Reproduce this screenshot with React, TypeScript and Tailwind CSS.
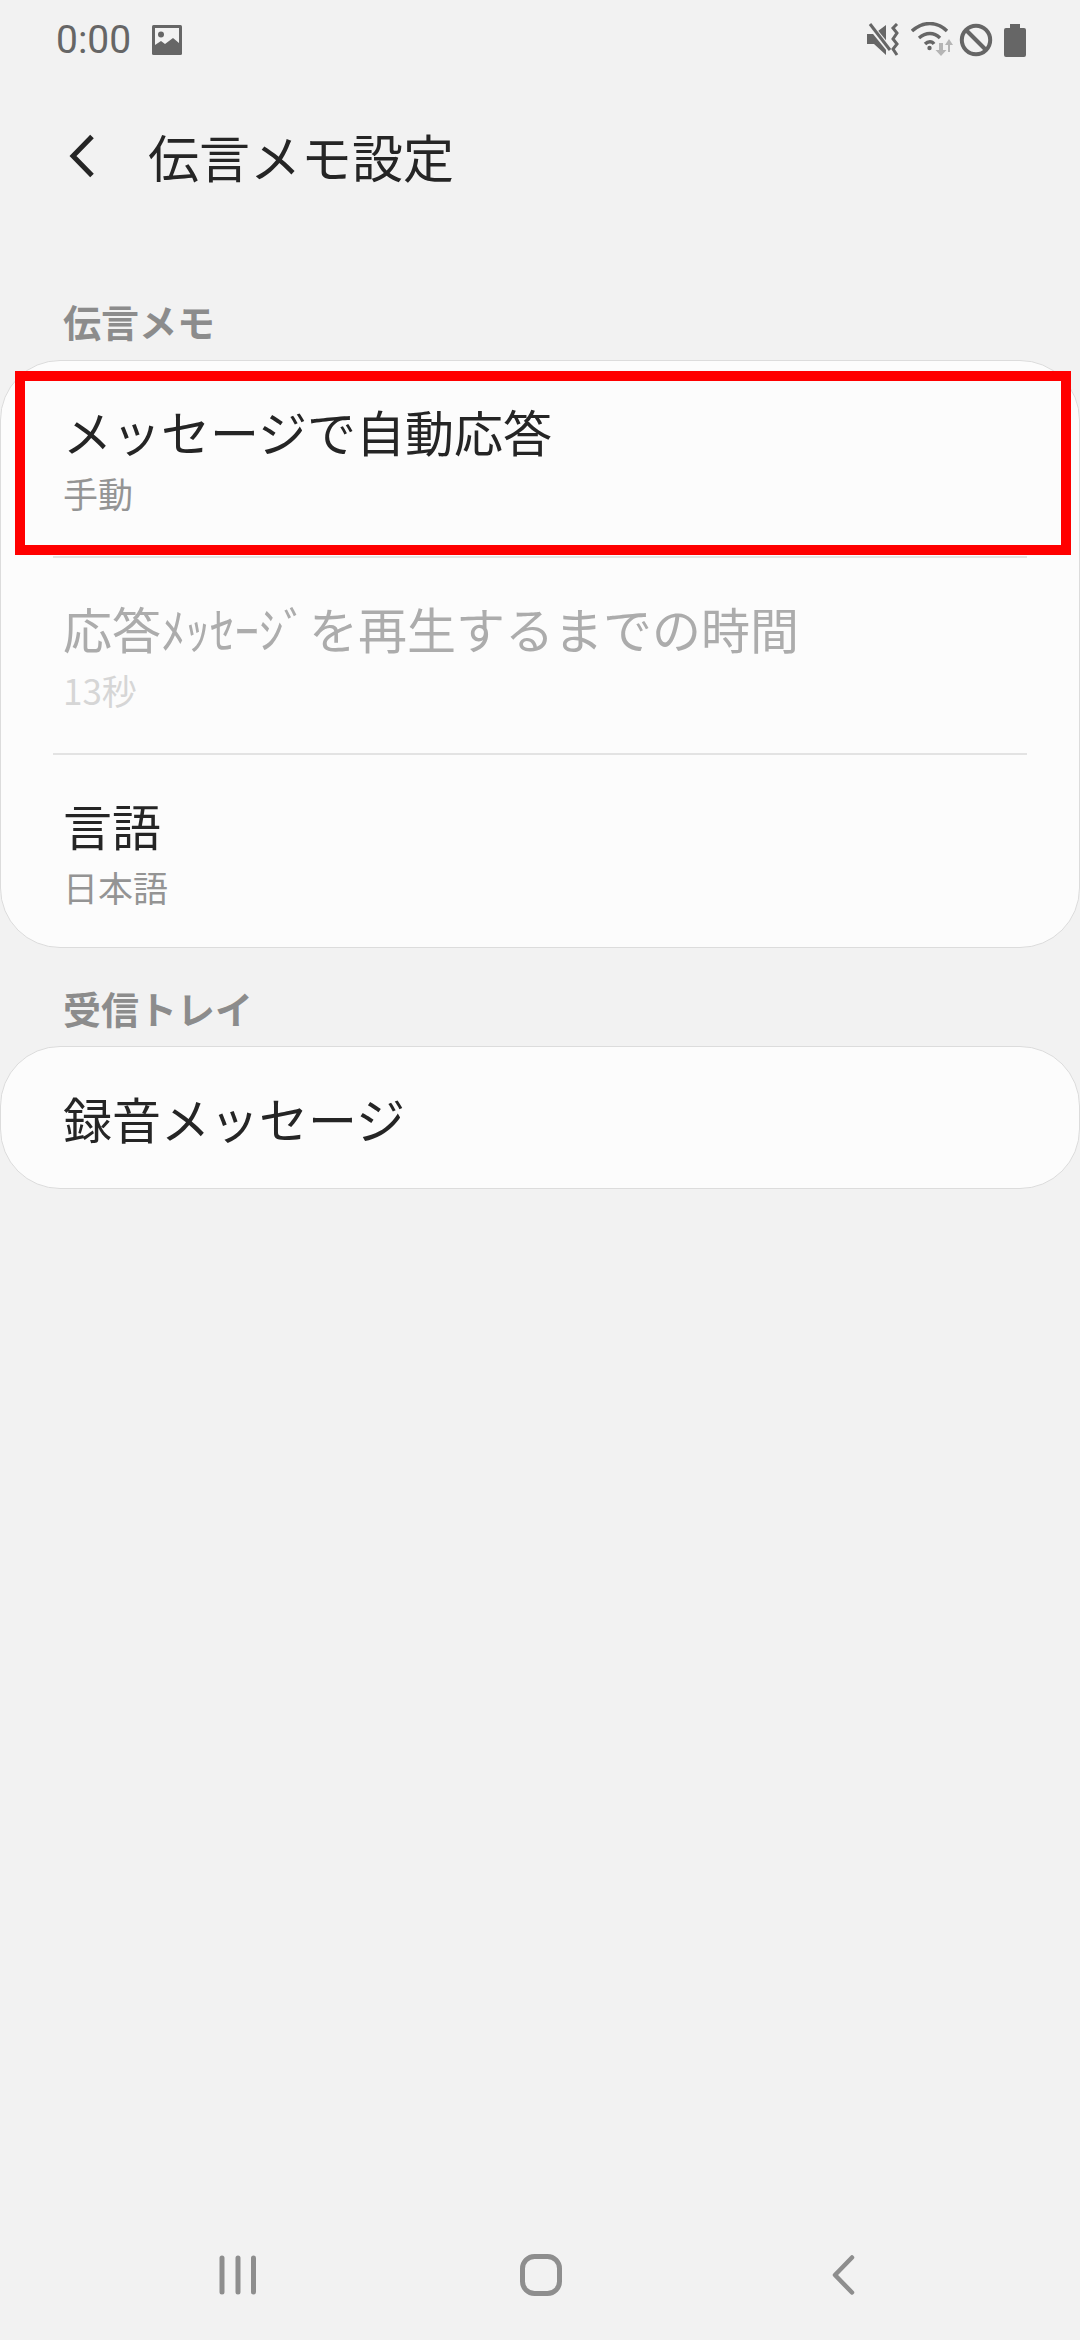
const cjk = { fontFamily: '"Noto Sans CJK JP", "Noto Sans", sans-serif' }

function StatusIcons() {
  return (
    <div className="flex items-center">
      {/* mute + vibrate */}
      <svg width="34" height="34" viewBox="0 0 34 34" className="mr-[11px]">
        <path d="M1 11h7L20 2v30L8 21H1z" fill="#666" />
        <path d="M2 0l22 27" stroke="#f2f2f2" strokeWidth="6" />
        <path d="M4 1l20 26" stroke="#666" strokeWidth="3" />
        <path d="M31 1l-4 4 4 5-4 6 4 5-4 5 4 6" fill="none" stroke="#666" strokeWidth="3" />
      </svg>
      {/* wifi with data arrows */}
      <svg width="42" height="36" viewBox="0 0 42 36" className="mr-[6px]">
        <path d="M1 9c11-10 25-10 35 0" fill="none" stroke="#666" strokeWidth="3.4" />
        <path d="M8 16c7-6 15-6 21 0" fill="none" stroke="#666" strokeWidth="3.4" />
        <path d="M14 22c3-3 7-3 9 0" fill="none" stroke="#666" strokeWidth="3.4" />
        <circle cx="18.5" cy="26" r="2.2" fill="#666" />
        <path d="M28 21v7h-3.500l5.500 6 5.500-6H32v-7z" fill="#b5b5b5" />
        <path d="M37 30v-7h-3l4-6 4 6h-3v7z" fill="#b5b5b5" />
      </svg>
      {/* do not disturb */}
      <svg width="34" height="34" viewBox="0 0 34 34" className="mr-[11px]">
        <circle cx="17" cy="17" r="14.200" fill="none" stroke="#666" strokeWidth="4" />
        <path d="M7 7l20 20" stroke="#666" strokeWidth="4" />
      </svg>
      {/* battery */}
      <svg width="22" height="33" viewBox="0 0 22 33">
        <path d="M6 0h10v4h4a2 2 0 0 1 2 2v25a2 2 0 0 1-2 2H2a2 2 0 0 1-2-2V6a2 2 0 0 1 2-2h4z" fill="#666" />
      </svg>
    </div>
  )
}

function Row({ title, sub, disabled }: { title: string; sub?: string; disabled?: boolean }) {
  return (
    <div className={sub ? 'h-[195px] last:h-[191px] px-[62px] pt-[34px]' : 'h-[141px] px-[62px] flex items-center'}>
      <div className={`text-[49px] leading-[72px] whitespace-nowrap [word-spacing:-10px] ${disabled ? 'text-[#acacac]' : 'text-[#252525]'}`}>
        {title}
      </div>
      {sub && (
        <div className={`mt-[3px] text-[35px] leading-[46px] whitespace-nowrap ${disabled ? 'text-[#d6d6d6]' : 'text-[#949494]'}`}>
          {sub}
        </div>
      )}
    </div>
  )
}

function Divider() {
  return <div className="mx-[52px] h-[2px] bg-[#e3e3e3]" />
}

export default function App() {
  return (
    <div className="relative w-[1080px] h-[2340px] bg-[#f2f2f2] flex flex-col overflow-hidden" style={cjk}>
      {/* Status bar */}
      <div className="h-[80px] pl-[56px] pr-[54px] flex items-center justify-between">
        <div className="flex items-center">
          <span className="text-[39px] leading-none text-[#666]" style={{ fontFamily: 'Roboto, sans-serif' }}>
            0:00
          </span>
          <svg width="30" height="30" viewBox="0 0 30 30" className="ml-[21px] -mt-[1px]">
            <rect width="30" height="30" rx="1.500" fill="#666" />
            <rect x="3" y="3" width="24" height="19" fill="#f2f2f2" />
            <circle cx="9" cy="9.500" r="3" fill="#666" />
            <path d="M3 20l6-4 4 3 8-6 6 5v12H3z" fill="#666" />
          </svg>
        </div>
        <StatusIcons />
      </div>

      {/* Header */}
      <div className="h-[80px] mt-[39px] flex items-center pl-[68px]">
        <svg width="30" height="46" viewBox="0 0 30 46" className="shrink-0 -mt-[6px]">
          <path d="M24 3.500L5 23l19 19.500" fill="none" stroke="#252525" strokeWidth="5" />
        </svg>
        <h1 className="ml-[50px] -mt-[6px] text-[51px] font-normal text-[#252525] leading-none">伝言メモ設定</h1>
      </div>

      {/* 伝言メモ */}
      <div className="mt-[95px] pl-[63px] text-[38px] leading-[54px] font-bold text-[#8c8c8c]">伝言メモ</div>
      <div className="mt-[12px] bg-[#fcfcfc] border border-[#dcdcdc] rounded-[60px] h-[588px]">
        <Row title="メッセージで自動応答" sub="手動" />
        <Divider />
        <Row title="応答ﾒｯｾｰｼﾞ を再生するまでの時間" sub="13秒" disabled />
        <Divider />
        <Row title="言語" sub="日本語" />
      </div>

      {/* 受信トレイ */}
      <div className="mt-[33px] pl-[63px] text-[38px] leading-[54px] font-bold text-[#8c8c8c]">受信トレイ</div>
      <div className="mt-[11px] bg-[#fcfcfc] border border-[#dcdcdc] rounded-[60px]">
        <Row title="録音メッセージ" />
      </div>

      {/* Nav bar */}
      <div className="mt-auto mb-[35px] pl-[198px] pr-[197px] flex items-center justify-between">
        <svg width="80" height="60" viewBox="0 0 80 60">
          <path d="M24 13v34M40 13v34M55.500 13v34" fill="none" stroke="#8e8e8e" strokeWidth="5" strokeLinecap="round" />
        </svg>
        <svg width="80" height="60" viewBox="0 0 80 60">
          <rect x="21.500" y="11.500" width="37" height="37" rx="12" fill="none" stroke="#8e8e8e" strokeWidth="5" />
        </svg>
        <svg width="80" height="60" viewBox="0 0 80 60">
          <path d="M49 12.500L32 30l17 17.500" fill="none" stroke="#8e8e8e" strokeWidth="4.500" strokeLinecap="round" strokeLinejoin="round" />
        </svg>
      </div>

      {/* Red highlight */}
      <div className="absolute left-[15px] top-[371px] w-[1056px] h-[184px] border-[10px] border-[#ff0000]" />
    </div>
  )
}
